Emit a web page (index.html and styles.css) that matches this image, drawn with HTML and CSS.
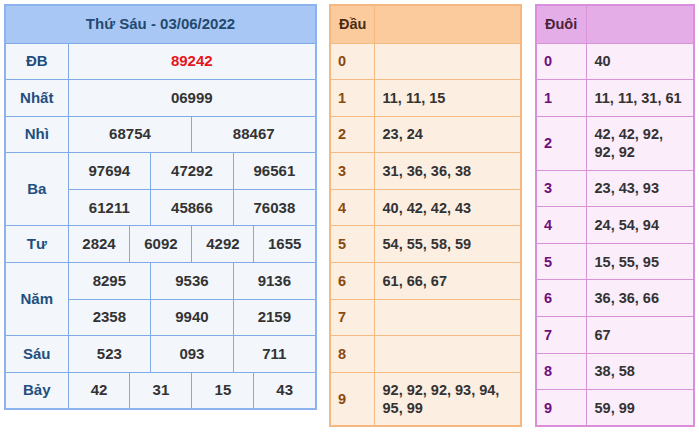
FILE: index.html
```html
<!DOCTYPE html>
<html lang="vi">
<head>
<meta charset="utf-8">
<title>Kết quả Thứ Sáu - 03/06/2022</title>
<link rel="stylesheet" href="styles.css">
</head>
<body>
<div class="wrap">
  <table class="kq">
    <colgroup>
      <col class="c-label">
      <col><col><col><col><col><col><col><col><col><col><col><col>
    </colgroup>
    <tr class="head"><th colspan="13">Thứ Sáu - 03/06/2022</th></tr>
    <tr><td class="lbl">ĐB</td><td colspan="12" class="db">89242</td></tr>
    <tr><td class="lbl">Nhất</td><td colspan="12">06999</td></tr>
    <tr><td class="lbl">Nhì</td><td colspan="6">68754</td><td colspan="6">88467</td></tr>
    <tr><td class="lbl" rowspan="2">Ba</td><td colspan="4">97694</td><td colspan="4">47292</td><td colspan="4">96561</td></tr>
    <tr><td colspan="4">61211</td><td colspan="4">45866</td><td colspan="4">76038</td></tr>
    <tr><td class="lbl">Tư</td><td colspan="3">2824</td><td colspan="3">6092</td><td colspan="3">4292</td><td colspan="3">1655</td></tr>
    <tr><td class="lbl" rowspan="2">Năm</td><td colspan="4">8295</td><td colspan="4">9536</td><td colspan="4">9136</td></tr>
    <tr><td colspan="4">2358</td><td colspan="4">9940</td><td colspan="4">2159</td></tr>
    <tr><td class="lbl">Sáu</td><td colspan="4">523</td><td colspan="4">093</td><td colspan="4">711</td></tr>
    <tr><td class="lbl">Bảy</td><td colspan="3">42</td><td colspan="3">31</td><td colspan="3">15</td><td colspan="3">43</td></tr>
  </table>

  <table class="lt dau">
    <colgroup><col class="c-key"><col></colgroup>
    <tr class="head"><th>Đầu</th><th></th></tr>
    <tr><td class="k">0</td><td></td></tr>
    <tr><td class="k">1</td><td>11, 11, 15</td></tr>
    <tr><td class="k">2</td><td>23, 24</td></tr>
    <tr><td class="k">3</td><td>31, 36, 36, 38</td></tr>
    <tr><td class="k">4</td><td>40, 42, 42, 43</td></tr>
    <tr><td class="k">5</td><td>54, 55, 58, 59</td></tr>
    <tr><td class="k">6</td><td>61, 66, 67</td></tr>
    <tr><td class="k">7</td><td></td></tr>
    <tr><td class="k">8</td><td></td></tr>
    <tr class="tall"><td class="k">9</td><td>92, 92, 92, 93, 94, 95, 99</td></tr>
  </table>

  <table class="lt duoi">
    <colgroup><col class="c-key"><col></colgroup>
    <tr class="head"><th>Đuôi</th><th></th></tr>
    <tr><td class="k">0</td><td>40</td></tr>
    <tr><td class="k">1</td><td>11, 11, 31, 61</td></tr>
    <tr class="tall"><td class="k">2</td><td>42, 42, 92, 92, 92</td></tr>
    <tr><td class="k">3</td><td>23, 43, 93</td></tr>
    <tr><td class="k">4</td><td>24, 54, 94</td></tr>
    <tr><td class="k">5</td><td>15, 55, 95</td></tr>
    <tr><td class="k">6</td><td>36, 36, 66</td></tr>
    <tr><td class="k">7</td><td>67</td></tr>
    <tr><td class="k">8</td><td>38, 58</td></tr>
    <tr><td class="k">9</td><td>59, 99</td></tr>
  </table>
</div>
</body>
</html>
```

FILE: styles.css
```css
* { box-sizing: border-box; }

html, body {
  margin: 0;
  padding: 0;
  background: #ffffff;
}

body {
  font-family: "Liberation Sans", Arial, sans-serif;
  font-weight: bold;
  font-size: 14.5px;
  color: #333333;
}

.wrap {
  display: flex;
  align-items: flex-start;
  padding: 4px 0 0 4px;
}

table {
  border-collapse: collapse;
  table-layout: fixed;
}

th, td {
  padding: 0;
  line-height: 18px;
}

tr { height: 36.6px; }
tr.head { height: 38px; }

/* ---------- Kết quả (blue) ---------- */
.kq {
  width: 313px;
  border: 2px solid #8cb3ee;
  background: #f3f6fb;
}
.kq .c-label { width: 63px; }
.kq th, .kq td {
  border: 1px solid #80a9e8;
  text-align: center;
}
.kq th {
  background: #a8c7f5;
  color: #234a6e;
  font-size: 15px;
}
.kq td { font-size: 15px; }
.kq .lbl { color: #1e4f7f; }
.kq .db { color: #e8141b; }

/* ---------- Đầu / Đuôi ---------- */
.lt td, .lt th {
  text-align: left;
  vertical-align: middle;
  padding: 0 8px;
}
.lt td.k { padding: 0 7px; }
.lt tr.tall { height: 54px; }

.dau {
  width: 193px;
  margin-left: 12px;
  border: 2px solid #f5b880;
  background: #fdeee2;
}
.dau .c-key { width: 44px; }
.dau td, .dau th { border: 1px solid #f4ba84; }
.dau th { background: #fbcb9e; color: #4a2c14; }
.dau .k { color: #8a4b0e; }
.dau td:last-child { padding-right: 10px; }

.duoi {
  width: 160px;
  margin-left: 13px;
  border: 2px solid #da8fda;
  background: #fcedfb;
  height: 422px;
}
.duoi .c-key { width: 50px; }
.duoi td, .duoi th { border: 1px solid #d993d9; }
.duoi th { background: #e5ade7; color: #4a2438; }
.duoi .k { color: #6c117b; }
.duoi td:last-child { padding-right: 10px; }
```
